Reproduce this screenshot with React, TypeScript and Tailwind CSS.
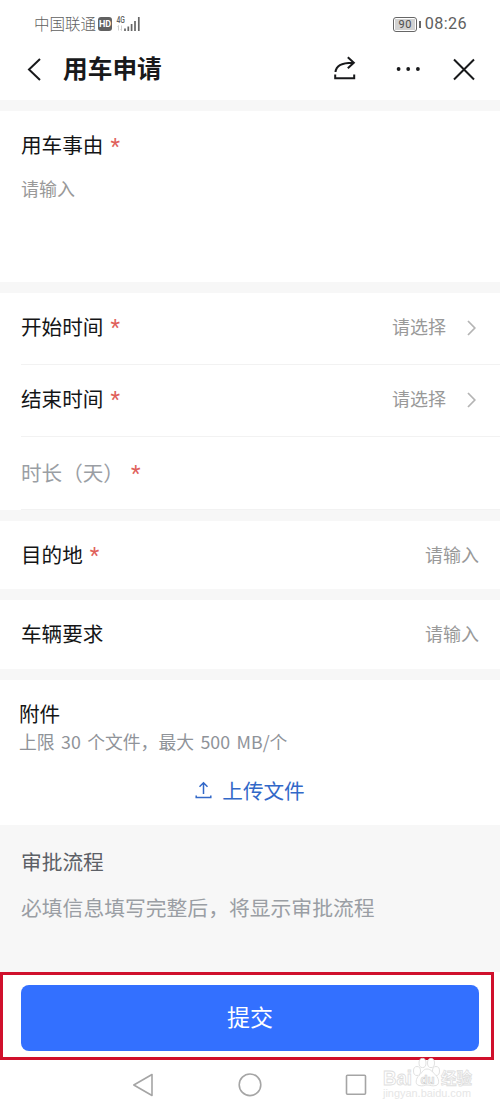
import { ReactNode } from "react";

// 공통 폼 행: 왼쪽 라벨 + 오른쪽 내용
function Label({ text, required, muted }: { text: string; required?: boolean; muted?: boolean }) {
    return (
        <div className="flex h-[30px] items-center text-[20.6px] leading-[30px]">
            <span className={muted ? "text-[#9a9ea4]" : "text-[#141516]"}>{text}</span>
            {required && (
                <span className="ml-[7px] mt-[5px] font-['Roboto',sans-serif] text-[22px] leading-[30px] text-[#e0615b]">*</span>
            )}
        </div>
    );
}

function Placeholder({ children }: { children: ReactNode }) {
    return <span className="text-[18px] leading-[26px] text-[#999999]">{children}</span>;
}

function Chevron() {
    return (
        <svg className="ml-[21px] mr-[3px] mt-[4px]" width="9" height="16" viewBox="0 0 9 16" fill="none" stroke="#b4b4b4" strokeWidth="1.7">
            <path d="M1 1l6.8 7L1 15" />
        </svg>
    );
}

function StatusBar() {
    return (
        <div className="flex h-[40px] items-start justify-between pl-[34px] pr-[33px] pt-[11px] text-[#5f5f5f]">
            <div className="flex h-[26px] items-center">
                <span className="mb-[2px] text-[15.5px] leading-[26px] font-light">中国联通</span>
                <span className="ml-[2px] flex h-[14px] w-[14px] items-center justify-center rounded-[3px] bg-[#616161] font-['Roboto',sans-serif] text-[9px] font-bold leading-none text-white">
                    HD
                </span>
                <svg className="ml-[4px]" width="25" height="18" viewBox="0 0 25 18">
                    <text x="0.5" y="8" fontSize="8.5" fontWeight="500" fontFamily="Roboto, sans-serif" fill="#606060" textLength="8.500" lengthAdjust="spacingAndGlyphs">4G</text>
                    <path d="M2.5 10.500v5M1.5 11.500l1-1M5.5 15.500v-5M4.5 14.500l1 1" stroke="#c8c8c8" strokeWidth="0.9" fill="none" />
                    <path d="M9 16v-2.5M12.3 16v-4.5M15.6 16V9M19 16V6M22.8 16V2" stroke="#666666" strokeWidth="1.7" />
                </svg>
            </div>
            <div className="flex h-[26px] items-center">
                <span className="flex h-[15px] w-[24px] items-center justify-center rounded-[3px] border border-[#666666] p-px">
                    <span className="flex h-full w-full items-center justify-center bg-[#d2d2d2] font-['Roboto',sans-serif] text-[11px] leading-none tracking-[0.5px] text-[#4c4c4c]">
                        90
                    </span>
                </span>
                <span className="ml-[2px] h-[7px] w-[1.5px] bg-[#666666]" />
                <span className="ml-[4px] font-['Roboto',sans-serif] text-[16.2px] leading-[26px] tracking-[0.4px]">08:26</span>
            </div>
        </div>
    );
}

function Header() {
    return (
        <header className="flex h-[60px] items-start pl-[27px] pr-[25px] pt-[8px] text-[#18191b]">
            <svg className="mt-[10px]" width="14" height="23" viewBox="0 0 14 23" fill="none" stroke="currentColor" strokeWidth="2">
                <path d="M13 1L2 11.5 13 22" />
            </svg>
            <h1 className="ml-[22px] text-[24.7px] font-bold leading-[38px]">用车申请</h1>
            <svg className="ml-auto mt-[8px]" width="22" height="24" viewBox="0 0 22 24" fill="none" stroke="currentColor" strokeWidth="2">
                <path d="M1.5 16C2 10 8 6.5 19.5 6.7M13.8 1.3l6 5.4-6 5.5M1.2 18.5v3.8h19v-3.8" />
            </svg>
            <svg className="ml-[40px] mt-[18px]" width="25" height="6" viewBox="0 0 25 6" fill="currentColor">
                <circle cx="2.6" cy="3" r="1.9" />
                <circle cx="12.2" cy="3" r="1.9" />
                <circle cx="21.9" cy="3" r="1.9" />
            </svg>
            <svg className="ml-[32px] mt-[10px]" width="22" height="23" viewBox="0 0 22 23" fill="none" stroke="currentColor" strokeWidth="2">
                <path d="M1 1.5l20 20M21 1.5l-20 20" />
            </svg>
        </header>
    );
}

// 오른쪽 아래 반투명 로고
function Watermark() {
    return (
        <svg className="absolute left-[380px] top-[1055px]" width="96" height="48" viewBox="0 0 96 48" fontFamily="'Liberation Sans', 'Noto Sans CJK SC', sans-serif">
            <g fill="#ffffff" stroke="#dedede" strokeWidth="0.9">
                <text x="3" y="30" fontSize="20" fontWeight="700" textLength="29" lengthAdjust="spacingAndGlyphs">Bai</text>
                <ellipse cx="37" cy="16" rx="3.5" ry="4.5" />
                <ellipse cx="42.5" cy="8" rx="3.5" ry="4.6" />
                <ellipse cx="51" cy="8" rx="3.5" ry="4.6" />
                <ellipse cx="56" cy="16" rx="3.5" ry="4.5" />
                <path d="M47 14c-4 0-5 4-8 6.500s-4.500 9 0 10 5-.5 8-.5 5 1.500 9 .5 3-7 0-10-5-6.500-9-6.500z" />
                <text x="40.500" y="29" fontSize="12" fontWeight="700" textLength="14" lengthAdjust="spacingAndGlyphs" stroke="#cfcfcf" strokeWidth="0.7">du</text>
                <text x="61" y="29" fontSize="15.500" fontWeight="700" strokeWidth="0.8">经验</text>
            </g>
            <text x="3" y="42" fontSize="10.5" fill="#e6e6e6" textLength="88" lengthAdjust="spacingAndGlyphs">jingyan.baidu.com</text>
        </svg>
    );
}

function App() {
    return (
        <main className="relative flex h-[1111px] w-[500px] flex-col overflow-hidden bg-[#f7f7f7] font-['Noto_Sans_CJK_SC',sans-serif]">
            <div className="h-[100px] bg-white">
                <StatusBar />
                <Header />
            </div>

            {/* 用车事由 */}
            <section className="mt-[11px] h-[171px] bg-white px-[21px] pt-[18px]">
                <Label text="用车事由" required />
                <div className="mt-[16px] flex">
                    <Placeholder>请输入</Placeholder>
                </div>
            </section>

            {/* 시간 선택 */}
            <section className="mt-[11px] h-[217px] bg-white pl-[21px]">
                <div className="flex h-[72px] items-center justify-between border-b border-[#f2f2f2] pb-[6px] pr-[21px]">
                    <Label text="开始时间" required />
                    <div className="flex items-center">
                        <Placeholder>请选择</Placeholder>
                        <Chevron />
                    </div>
                </div>
                <div className="flex h-[72px] items-center justify-between border-b border-[#f2f2f2] pb-[6px] pr-[21px]">
                    <Label text="结束时间" required />
                    <div className="flex items-center">
                        <Placeholder>请选择</Placeholder>
                        <Chevron />
                    </div>
                </div>
                <div className="flex h-[73px] items-center border-b border-[#f2f2f2] pb-[3px]">
                    <Label text="时长（天）" required muted />
                </div>
            </section>

            <section className="mt-[11px] flex h-[68px] items-center justify-between bg-white px-[21px] pb-[3px]">
                <Label text="目的地" required />
                <Placeholder>请输入</Placeholder>
            </section>

            <section className="mt-[11px] flex h-[69px] items-center justify-between bg-white px-[21px] pb-[4px]">
                <Label text="车辆要求" />
                <Placeholder>请输入</Placeholder>
            </section>

            {/* 첨부 파일 */}
            <section className="mt-[11px] h-[145px] bg-white px-[19px] pt-[18px]">
                <Label text="附件" />
                <p className="text-[17.8px] leading-[26px] text-[#8f9399] [word-spacing:2.5px]">上限 30 个文件，最大 500 MB/个</p>
                <button className="mx-auto mt-[21px] flex items-center text-[#3268c8]">
                    <svg width="17" height="18" viewBox="0 0 17 18" fill="none" stroke="currentColor" strokeWidth="1.5">
                        <path d="M8.500 13V2M4.500 5.700l4-4 4 4M1.200 14.500v2h14.600v-2" />
                    </svg>
                    <span className="ml-[10px] text-[20.6px] leading-[30px]">上传文件</span>
                </button>
            </section>

            <section className="h-[147px] px-[21px] pt-[21px]">
                <h2 className="text-[20.7px] leading-[30px] text-[#5c6066]">审批流程</h2>
                <p className="mt-[16px] whitespace-nowrap text-[20.8px] leading-[30px] text-[#9a9ea4]">必填信息填写完整后，将显示审批流程</p>
            </section>

            {/* 제출 버튼 */}
            <footer className="grow bg-white">
                <div className="flex h-[88px] w-[494px] items-center border-[3px] border-[#d0102c] pl-[18px] pt-[3px]">
                    <button className="h-[66px] w-[458px] shrink-0 rounded-[8px] bg-[#3370ff] pb-[3px] text-[23px] leading-[34px] text-white">
                        提交
                    </button>
                </div>
                <nav className="flex items-start pl-[132px] pt-[13px]">
                    <svg width="236" height="24" viewBox="0 0 236 24" fill="none" stroke="#a5a5a5" strokeWidth="1.6" strokeLinejoin="round">
                        <path d="M20 1.500v21L1.800 12z" />
                        <circle cx="118" cy="11.800" r="10.800" />
                        <rect x="214.500" y="2.200" width="19" height="19" rx="1" />
                    </svg>
                </nav>
            </footer>
            <Watermark />
        </main>
    );
}

export default App;
